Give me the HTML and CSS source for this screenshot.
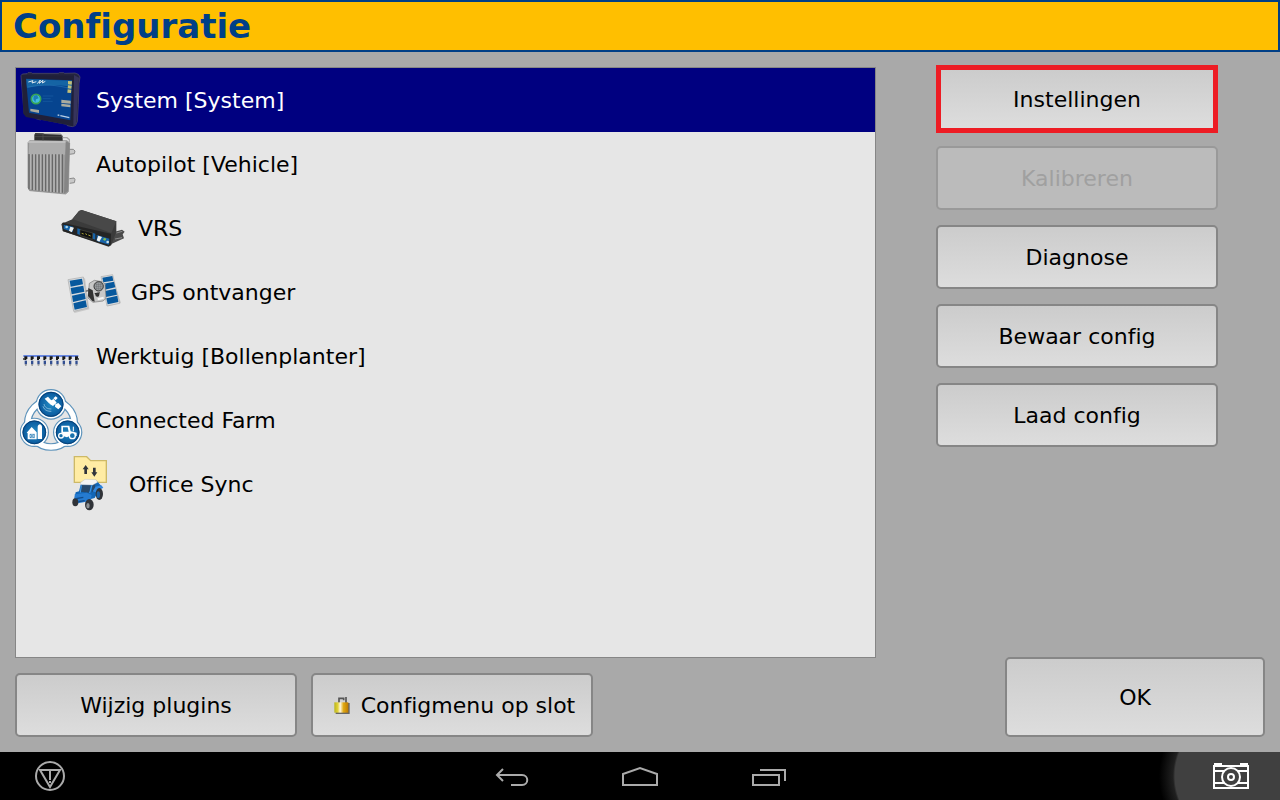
FILE: index.html
```html
<!DOCTYPE html>
<html lang="nl">
<head>
    <meta charset="UTF-8">
    <meta name="viewport" content="width=device-width, initial-scale=1.0">
    <title>Configuratie</title>
    <link rel="stylesheet" href="styles.css">
</head>
<body>
<header class="title-bar">
    <h1>Configuratie</h1>
</header>

<main class="content">
    <div class="left-section">
        <ul class="plugin-list">
            <li>
                <button type="button" class="plugin selected">
                    <svg class="icon" viewBox="24 12 204 192" aria-hidden="true">
                        <path d="M27 35l4-5 14-1 3-3h10l3 2h78l3-2h13l3 2 31-1 10 4 5 8-3 20-2 62-3 52-6 12-9 3-15-3-2-4-76-15-2 2-14-4-2-4-26-7-8-8z" fill="#24243f" stroke="#555268" stroke-width="2"/>
                        <path d="M29 34l158 1 13 8-3 24-6 116-8 3-141-27-8-10z" fill="#202039"/>
                        <path d="M186 33l15 8-8 139-9 8z" fill="#36345c"/>
                        <path d="M42 44l138 5-5 120-124-23z" fill="#06448f"/>
                        <path d="M43 46l137 4-1 18c-54-9-92-6-134 4z" fill="#1564a4"/>
                        <path d="M49 54l14-4-3 7 13-4m3 6 9-11-3 10 11-9-2 8 9-5" fill="none" stroke="#dce7ee" stroke-width="3"/>
                        <path d="M48 69c50-9 83-7 128 5" fill="none" stroke="#2676b5" stroke-width="2"/>
                        <path d="M92 96h32M92 104h24M92 112h30" fill="none" stroke="#1a5fa5" stroke-width="2"/>
                        <circle cx="72" cy="105" r="14" fill="#42bfdd" stroke="#37a554" stroke-width="5"/>
                        <path d="M65 95l10-2 5 10-8 3-2 9-6-9z" fill="#1b80bb"/>
                        <path d="M168 51l12 1-1 10-11-1zm0 13 11 1-1 9-11-1zm-1 12 11 1-1 10-11-1z" fill="#c3bf78"/>
                        <path d="M148 107l28 3v9l-28-2zm0 12 27 3v8l-27-3zM55 134l26 4v9l-26-5z" fill="#a9ab9f"/>
                        <path d="M137 153l5 1m3 1 27 6" stroke="#b9cfe6" stroke-width="4"/>
                    </svg>
                    <span>System [System]</span>
                </button>
            </li>
            <li>
                <button type="button" class="plugin">
                    <svg class="icon" viewBox="24 12 204 192" aria-hidden="true">
                        <path d="M170 64h14l5 5-2 8-15 2m0 73 14-2 3 5-2 9-14 2" fill="#c8c8c8" stroke="#8a8a8a" stroke-width="3"/>
                        <path d="M48 44l5-6h112l8 7-4 146-8 7-108-10-5-9z" fill="#9c9c9c" stroke="#858585" stroke-width="2"/>
                        <path d="M52 38h108l6 8-7 34H50z" fill="#adadad"/>
                        <path d="M48 42h115l2 37" fill="none" stroke="#cfcfcf" stroke-width="3"/>
                        <path d="M161 40l12 5-5 144-12 8z" fill="#858585"/>
                        <path d="M51 78v106m10-105v107m10-107v108m10-108v109m10-109v110m10-110v111m10-111v112m10-112v113m10-113v114m10-114v115m10-115v115" stroke="#686868" stroke-width="4"/>
                        <path d="M56 78v106m10-105v107m10-107v108m10-108v109m10-109v110m10-110v111m10-111v112m10-112v113m10-113v114m10-114v115" stroke="#b4b4b4" stroke-width="4"/>
                        <path d="M67 20l3-5 23 1 5 2 49 2 5 5v13l-85-1z" fill="#303030"/>
                        <path d="M69 18h77l5 6M93 18v20M69 26h82" fill="none" stroke="#555" stroke-width="2"/>
                        <path d="M152 29h13l7 6v10" fill="none" stroke="#aaa" stroke-width="4"/>
                    </svg>
                    <span>Autopilot [Vehicle]</span>
                </button>
            </li>
            <li>
                <button type="button" class="plugin child">
                    <svg class="icon icon-vrs" viewBox="15 -12 210 192" aria-hidden="true">
                        <path d="M169 98l32-9 8 6-6 8 4 12-38 17zM21 70l7-4 5 18-10 2z" fill="#4a4a4a"/>
                        <path d="M19 72l33-14 20-25 8-3 104 34v31l-15 40-8 5-137-46z" fill="#3b3b3b"/>
                        <path d="M52 57l20-24 8-3 104 34-15 35z" fill="#484848"/>
                        <path d="M23 68l145 33-1 35-7 2-137-45z" fill="#242424"/>
                        <path d="M26 74l28 6-1 16-27-9zM67 85l10 3v18l-10-4zM112 98l9 3v18l-9-3zM125 105l38 11-1 18-37-11z" fill="#1763a8"/>
                        <path d="M75 89l38 10-1 19-37-12z" fill="#111" stroke="#4a4a3c" stroke-width="2"/>
                        <circle cx="35" cy="81" r="4" fill="#a8d5e7"/>
                        <path d="M42 92l4-12 11 3-7 14zM125 121l5-14 11 4-8 14z" fill="#edf1f2"/>
                        <path d="M80 100l6 2m5-1 5 3m4 1 7 3" stroke="#a9a435" stroke-width="3"/>
                        <circle cx="149" cy="118" r="4" fill="#83b952"/>
                        <circle cx="158" cy="126" r="4" fill="#c4e0ec"/>
                        <path d="M184 99l18-5m-22 23 21-4" stroke="#8b8b8b" stroke-width="3"/>
                    </svg>
                    <span>VRS</span>
                </button>
            </li>
            <li>
                <button type="button" class="plugin child">
                    <svg class="icon icon-gps" viewBox="0 -6 189 192" aria-hidden="true">
                        <path d="M29 57l46-8 13 93-45 11zM128 45l28-5 27 83-40 10z" fill="#aaa" opacity=".5"/>
                        <path d="M68 90l60-16" stroke="#777" stroke-width="5"/>
                        <path d="M24 53l46-8 14 93-43 10z" fill="#d6dadd" stroke="#aaa" stroke-width="2"/>
                        <path d="M29 56l37-6 3 17-37 7zM32 78l38-7 3 18-38 8zM36 101l38-8 3 18-38 9zM40 124l37-9 4 20-37 8z" fill="#07589d"/>
                        <path d="M123 44l35-6 21 86-38 8z" fill="#d6dadd" stroke="#aaa" stroke-width="2"/>
                        <path d="M127 47l30-5 3 14-30 5zM131 65l31-6 4 17-32 7zM135 87l32-7 4 18-33 7zM139 109l33-8 3 19-32 7z" fill="#07589d"/>
                        <path d="M88 64l15-9 24 4 8 8 3 42-9 8-30 4-15-13z" fill="#c8c8c8" stroke="#777" stroke-width="2"/>
                        <path d="M85 78l13 7 6 34-7-2-13-15z" fill="#333"/>
                        <circle cx="116" cy="73" r="14" fill="#9ca1a4" stroke="#333" stroke-width="3"/>
                        <path d="M104 68h24m-25 6h26m-24 6h21M110 60v25m6-27v29m6-26v23" stroke="#555" stroke-width="1"/>
                        <path d="M103 94l17-3-6 13z" fill="#222"/>
                        <circle cx="112" cy="98" r="6" fill="#333"/>
                        <path d="M113 112l18-5" stroke="#f5f5f5" stroke-width="6"/>
                    </svg>
                    <span>GPS ontvanger</span>
                </button>
            </li>
            <li>
                <button type="button" class="plugin">
                    <svg class="icon" viewBox="24 -48 204 192" aria-hidden="true">
                        <defs>
                            <g id="row-unit">
                                <path d="M-5 49h9v8h-3v3h-6v-6z" fill="#171717"/>
                                <path d="M-4 62h7v11h-7z" fill="#334f91"/>
                                <path d="M-3 73h5v4h-5z" fill="#888"/>
                            </g>
                        </defs>
                        <path d="M34 48h165" stroke="#3f69df" stroke-width="5"/>
                        <use href="#row-unit" x="42"/>
                        <use href="#row-unit" x="61"/>
                        <use href="#row-unit" x="80"/>
                        <use href="#row-unit" x="99"/>
                        <use href="#row-unit" x="118"/>
                        <use href="#row-unit" x="137"/>
                        <use href="#row-unit" x="156"/>
                        <use href="#row-unit" x="175"/>
                        <use href="#row-unit" x="194"/>
                        <path d="M33 57h5m157 0h6" stroke="#333" stroke-width="5"/>
                    </svg>
                    <span>Werktuig [Bollenplanter]</span>
                </button>
            </li>
            <li>
                <button type="button" class="plugin">
                    <svg class="icon" viewBox="24 12 204 192" aria-hidden="true">
                        <defs>
                            <radialGradient id="badge">
                                <stop offset="0" stop-color="#238bc4"/>
                                <stop offset="1" stop-color="#07559a"/>
                            </radialGradient>
                        </defs>
                        <g fill="#5d93bb">
                            <circle cx="117" cy="61" r="46"/>
                            <circle cx="67" cy="145" r="44"/>
                            <circle cx="167" cy="145" r="44"/>
                        </g>
                        <circle cx="117" cy="119" r="70" fill="none" stroke="#5d93bb" stroke-width="23"/>
                        <circle cx="117" cy="119" r="70" fill="none" stroke="#fff" stroke-width="16"/>
                        <g fill="url(#badge)" stroke="#fff" stroke-width="5">
                            <circle cx="117" cy="61" r="40"/>
                            <circle cx="67" cy="145" r="38"/>
                            <circle cx="167" cy="145" r="38"/>
                        </g>
                        <g fill="none" stroke="#084176" stroke-width="3">
                            <circle cx="117" cy="61" r="36"/>
                            <circle cx="67" cy="145" r="34"/>
                            <circle cx="167" cy="145" r="34"/>
                        </g>
                        <path d="M98 44l10-6 11 12-8 8zM114 51l11-6 9 11-11 10-11-7zM130 61l9-4 9 10-9 9-10-8zM124 43l7-6 6 5-6 7z" fill="#fff"/>
                        <path d="M93 67c4 12 14 15 25 15m-22-22c2 11 11 15 22 15" fill="none" stroke="#b3d9ed" stroke-width="2"/>
                        <path d="M44 146l15-17 15 16v21H47v-18zM77 165v-37c1-10 12-10 13 0v37z" fill="#fff"/>
                        <path d="M54 151h13v10H54zm0 0 13 10m0-10-13 10" fill="none" stroke="#1773b1" stroke-width="2"/>
                        <path d="M148 144v-19h24l4 17 18 4v10h-22l-7 4-16-5z" fill="#fff"/>
                        <path d="M153 130h14l3 13h-17z" fill="#1b7ab5"/>
                        <circle cx="181" cy="155" r="9" fill="#1972ac" stroke="#fff" stroke-width="4"/>
                        <circle cx="147" cy="155" r="7" fill="#1972ac" stroke="#fff" stroke-width="4"/>
                        <path d="M184 142v-14" stroke="#fff" stroke-width="3"/>
                    </svg>
                    <span>Connected Farm</span>
                </button>
            </li>
            <li>
                <button type="button" class="plugin child">
                    <svg class="icon icon-sync" viewBox="0 6 183 192" aria-hidden="true">
                        <path d="M43 20h37l12 12h47v65H43z" fill="#ffeca4" stroke="#cdb967" stroke-width="4"/>
                        <path d="M77 45l9 13h-5v14h-8V58h-5zM103 80l-9-13h5V53h8v14h5z" fill="#30343b"/>
                        <path d="M62 104l13-14 35 2 14 16-20 36-48 13-13-11 4-19 10-3z" fill="#1266b7"/>
                        <path d="M66 105h26l-4 23-26-3zM97 105l9-2-2 17-9 8z" fill="#27496c"/>
                        <path d="M60 99l15-11 33 1 5 8-15 8-34-1z" fill="#f4f4f4" stroke="#a9b0b8" stroke-width="1"/>
                        <path d="M44 133l36-5 15 7-4 18-37 7-10-10z" fill="#257bd1"/>
                        <path d="M98 124l9-14 17-4 6 7-23 14z" fill="#2f86dd"/>
                        <ellipse cx="118" cy="132" rx="11" ry="18" fill="#303338"/>
                        <ellipse cx="115" cy="134" rx="5" ry="10" fill="#1d62a5"/>
                        <ellipse cx="88" cy="164" rx="13" ry="17" fill="#303338"/>
                        <ellipse cx="84" cy="167" rx="5" ry="8" fill="#8e9296"/>
                        <ellipse cx="46" cy="157" rx="9" ry="12" fill="#303338"/>
                        <path d="M48 146l22-4m-15 13 19-3" stroke="#104b8b" stroke-width="4"/>
                        <path d="M64 106l-3 22m35-23-7 24" stroke="#4299e6" stroke-width="3"/>
                    </svg>
                    <span>Office Sync</span>
                </button>
            </li>
        </ul>
        <div class="bottom-buttons">
            <button type="button" class="btn">Wijzig plugins</button>
            <button type="button" class="btn btn-lock">
                <svg class="lock" viewBox="0 0 54 60" aria-hidden="true">
                    <defs>
                        <linearGradient id="gold">
                            <stop offset="0" stop-color="#b9b51c"/>
                            <stop offset=".25" stop-color="#e3d238"/>
                            <stop offset=".42" stop-color="#fff8e3"/>
                            <stop offset=".65" stop-color="#e1aa13"/>
                            <stop offset="1" stop-color="#bd7900"/>
                        </linearGradient>
                    </defs>
                    <path d="M18 26V10h14v6m7 8V6" fill="none" stroke="#555" stroke-width="5"/>
                    <path d="M8 24h42v33H8z" fill="#666"/>
                    <path d="M4 22h42v31H4z" fill="url(#gold)"/>
                </svg>
                Configmenu op slot
            </button>
        </div>
    </div>

    <div class="right-section">
        <div class="actions">
            <button type="button" class="btn highlighted">Instellingen</button>
            <button type="button" class="btn" disabled>Kalibreren</button>
            <button type="button" class="btn">Diagnose</button>
            <button type="button" class="btn">Bewaar config</button>
            <button type="button" class="btn">Laad config</button>
        </div>
        <button type="button" class="btn btn-ok">OK</button>
    </div>
</main>

<footer class="nav-bar">
    <button type="button" class="nav-btn nav-alert" aria-label="Meldingen">
        <svg width="32" height="32" viewBox="0 0 32 32">
            <circle cx="16" cy="16" r="14"/>
            <path d="M6 10h20L16 27z"/>
            <path d="M16 11v9m0 1v2"/>
        </svg>
    </button>
    <div class="nav-keys">
        <button type="button" class="nav-btn" aria-label="Terug">
            <svg width="36" height="24" viewBox="0 0 36 24">
                <path d="M9 5l-6 6 6 6M3 11h25c7 0 7 10 0 10H17"/>
            </svg>
        </button>
        <button type="button" class="nav-btn" aria-label="Start">
            <svg width="36" height="24" viewBox="0 0 36 24">
                <path d="M1 21V10l17-6 17 6v11z"/>
            </svg>
        </button>
        <button type="button" class="nav-btn" aria-label="Recente apps">
            <svg width="36" height="24" viewBox="0 0 36 24">
                <path d="M3 11h26v10H3zM10 6h25v11"/>
            </svg>
        </button>
    </div>
    <button type="button" class="nav-btn nav-camera" aria-label="Schermafdruk">
        <svg width="38" height="28" viewBox="0 0 38 28">
            <path d="M2 4h34v22H2zM2 9h10m14 0h10M2 21h10m14 0h10M3 2h6v2H3zm26 0h6v2h-6z"/>
            <circle cx="19" cy="15" r="9"/>
            <circle cx="19" cy="15" r="3"/>
        </svg>
    </button>
</footer>
</body>
</html>
```
FILE: styles.css
```css
* {
    box-sizing: border-box;
    margin: 0;
    padding: 0;
}

body {
    font-family: "DejaVu Sans", Verdana, sans-serif;
    font-size: 22px;
    font-variant-ligatures: none;
    min-height: 100vh;
    display: flex;
    flex-direction: column;
    background: #a9a9a9;
    color: #000;
}

button {
    font: inherit;
    font-variant-ligatures: none;
    color: inherit;
    cursor: pointer;
}

.title-bar {
    height: 52px;
    padding: 0 11px;
    display: flex;
    align-items: center;
    background: #ffbf00;
    border: 2px solid #003f87;
}

.title-bar h1 {
    font-size: 34px;
    line-height: 48px;
    color: #003f87;
}

.content {
    flex: 1;
    display: flex;
    gap: 60px;
    padding: 15px;
}

.left-section {
    flex: 1;
    display: flex;
    flex-direction: column;
    gap: 15px;
}

.plugin-list {
    flex: 1;
    list-style: none;
    background: #e6e6e6;
    border: 1px solid #868686;
}

.plugin {
    width: 100%;
    height: 64px;
    padding-left: 4px;
    display: flex;
    align-items: center;
    gap: 8px;
    background: none;
    border: none;
    text-align: left;
}

.plugin.child {
    padding-left: 44px;
}

.plugin.selected {
    background: #000080;
    color: #fff;
}

.icon {
    width: 68px;
    height: 64px;
    flex-shrink: 0;
}

.icon-vrs {
    width: 70px;
}

.icon-gps {
    width: 63px;
}

.icon-sync {
    width: 61px;
}

.btn {
    width: 282px;
    height: 64px;
    display: flex;
    justify-content: center;
    align-items: center;
    gap: 10px;
    background: linear-gradient(#cccccc, #dddddd);
    border: 2px solid #868686;
    border-radius: 5px;
}

.btn:disabled {
    background: #bbbbbb;
    border-color: #999;
    color: #a0a0a0;
    cursor: default;
}

.btn.highlighted {
    height: 68px;
    margin: -2px 0;
    border: 5px solid #ed1c24;
    border-radius: 0;
}

.bottom-buttons {
    display: flex;
    gap: 14px;
}

.btn-lock {
    padding-left: 4px;
}

.lock {
    width: 18px;
    height: 20px;
}

.right-section {
    width: 329px;
    display: flex;
    flex-direction: column;
    justify-content: space-between;
}

.actions {
    display: flex;
    flex-direction: column;
    gap: 15px;
}

.btn-ok {
    width: 260px;
    height: 80px;
    align-self: flex-end;
}

.nav-bar {
    height: 48px;
    display: grid;
    grid-template-columns: 1fr auto 1fr;
    background: #000;
}

.nav-keys {
    display: flex;
}

.nav-btn {
    width: 128px;
    height: 48px;
    display: flex;
    justify-content: center;
    align-items: center;
    background: none;
    border: none;
}

.nav-btn svg {
    fill: none;
    stroke: #aaa;
    stroke-width: 2;
}

.nav-alert {
    width: 100px;
}

.nav-camera {
    width: 130px;
    padding-left: 32px;
    justify-self: end;
    background: radial-gradient(circle at 89px 24px, #404040 64px, #202020 66px, #000 80px);
}

.nav-camera svg {
    stroke: #fff;
}
```
